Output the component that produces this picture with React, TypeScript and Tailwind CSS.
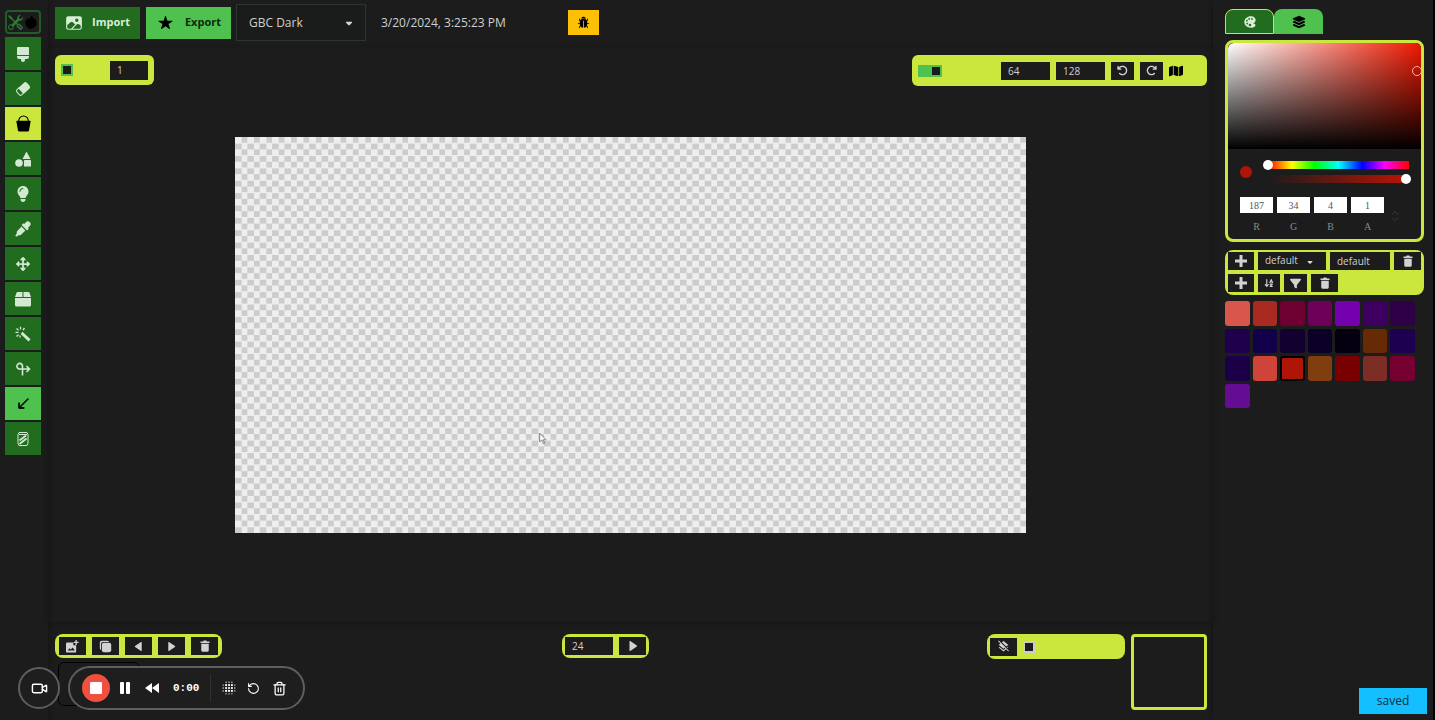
import { useState } from "react";
import type { ReactNode } from "react";
import { BiSolidLeftArrow, BiSolidRightArrow } from "react-icons/bi";
import { BsArrowDownLeft, BsTools } from "react-icons/bs";
import {
  FaArrowDownAZ,
  FaArrowRotateLeft,
  FaArrowRotateRight,
  FaArrowsUpDownLeftRight,
  FaCaretDown,
  FaFilter,
  FaLayerGroup,
  FaLightbulb,
  FaMap,
} from "react-icons/fa6";
import { ImPlus } from "react-icons/im";
import { IoBug, IoColorPalette, IoCopy, IoImage, IoStar } from "react-icons/io5";
import { MdLayersClear } from "react-icons/md";
import { LuChevronsUpDown, LuRotateCcw, LuTrash2, LuVideo } from "react-icons/lu";

const Glyph = ({ className = "size-4", children }: { className?: string; children: ReactNode }) => (
  <svg viewBox="0 0 16 16" className={className} fill="currentColor" stroke="none">
    {children}
  </svg>
);

const BrushIcon = () => (
  <Glyph>
    <path d="M3 1h10a1 1 0 0 1 1 1v7H2V2a1 1 0 0 1 1-1zM2 10h12v1a2 2 0 0 1-2 2h-2v1a2 2 0 0 1-4 0v-1H4a2 2 0 0 1-2-2z" />
  </Glyph>
);

const EraserIcon = () => (
  <Glyph>
    <g transform="rotate(-42 8 8)">
      <path d="M5.500 4H13a2 2 0 0 1 2 2v4a2 2 0 0 1-2 2H5.500z" />
      <path d="M5.500 4.500H3A1.500 1.500 0 0 0 1.500 6v4A1.500 1.500 0 0 0 3 11.500h2.500z" fill="none" stroke="currentColor" />
    </g>
  </Glyph>
);

const BucketIcon = () => (
  <Glyph className="size-[17px]">
    <path d="M3.500 6.500v-1a4.500 4.500 0 0 1 9 0v1" fill="none" stroke="currentColor" />
    <path d="M1.800 5.500h12.400a.5.500 0 0 1 .5.600L13.200 14.500a1.200 1.200 0 0 1-1.200 1H4a1.200 1.200 0 0 1-1.200-1L1.300 6.100a.5.500 0 0 1 .5-.6z" />
  </Glyph>
);

const ShapesIcon = () => (
  <Glyph>
    <circle cx="4" cy="12" r="3.800" />
    <path d="M11.500.5l4 7.500h-8z" />
    <rect x="9" y="9" width="7" height="6.500" rx=".6" />
  </Glyph>
);

const DropperIcon = () => (
  <Glyph>
    <path d="M14.800 1.200a2.700 2.700 0 0 0-3.900 0L9.200 3l-.9-.8-1.700 1.700 5.500 5.500 1.700-1.700-.8-.9 1.800-1.800a2.700 2.700 0 0 0 0-3.800z" />
    <path d="M6.500 5.600L2 10.200 1.500 13 .3 14.800l.9.9L3 14.500l2.800-.5 4.600-4.500z" />
  </Glyph>
);

const BoxIcon = () => (
  <Glyph>
    <path d="M3 1h4.500v5H0l1.500-4.200A1.300 1.300 0 0 1 3 1zM8.500 1H13a1.300 1.300 0 0 1 1.500.8L16 6H8.500zM0 7h16v7a1.500 1.500 0 0 1-1.500 1.500h-13A1.500 1.500 0 0 1 0 14z" />
  </Glyph>
);

const WandIcon = () => (
  <Glyph>
    <path d="M7.500 5.800l8 7.500-2 2.200-7.800-7.500z" />
    <path d="M5.500.8v2.700M9.500 2L8 4M1.500 2.500l2 1.700M.5 6.300h3M1.500 10.500l2-1.800M5 9.500v2" fill="none" stroke="currentColor" strokeWidth="1.300" />
  </Glyph>
);

const LoopIcon = () => (
  <Glyph>
    <path d="M7.500 14.500V6M7.500 8H5A2.800 2.800 0 1 1 7.500 5.500V8h6.500M11.500 5l3 3-3 3" fill="none" stroke="currentColor" strokeWidth="1.600" />
  </Glyph>
);

const MirrorIcon = () => (
  <Glyph>
    <path d="M4 1.500h8l1 2v9l-1 2H4l-1-2v-9z" fill="none" stroke="currentColor" />
    <path d="M4 3.500h8" stroke="currentColor" />
    <path d="M4.500 9.500l6.500-5M4.500 13l7-5.500" fill="none" stroke="currentColor" strokeWidth="1.800" />
  </Glyph>
);

const TrashIcon = () => (
  <Glyph className="size-3">
    <path d="M2 2h3.500l.8-1.500h3.400l.8 1.500H14v2H2z" />
    <path d="M3 5h10v9a1.500 1.500 0 0 1-1.500 1.500h-7A1.500 1.500 0 0 1 3 14z" />
  </Glyph>
);

const AddImageIcon = () => (
  <Glyph className="size-[13px]">
    <path d="M1.500 3H9v3.500h3.500V14a1.500 1.500 0 0 1-1.500 1.500H1.500A1.500 1.500 0 0 1 0 14V4.500A1.500 1.500 0 0 1 1.500 3zM2 13h9L8.200 9.300l-2.200 2.500-1.500-1.700z" fillRule="evenodd" />
    <path d="M12.500 0v6M9.500 3h6" stroke="currentColor" strokeWidth="1.600" />
  </Glyph>
);

const tools = [
  { name: "Brush", icon: <BrushIcon /> },
  { name: "Eraser", icon: <EraserIcon /> },
  { name: "Bucket", icon: <BucketIcon /> },
  { name: "Shapes", icon: <ShapesIcon /> },
  { name: "Light", icon: <FaLightbulb className="size-4" /> },
  { name: "Eyedropper", icon: <DropperIcon /> },
  { name: "Move", icon: <FaArrowsUpDownLeftRight /> },
  { name: "Selection box", icon: <BoxIcon /> },
  { name: "Magic wand", icon: <WandIcon /> },
  { name: "Rotate", icon: <LoopIcon /> },
  { name: "Line", icon: <BsArrowDownLeft className="size-[13px] stroke-1" /> },
  { name: "Mirror", icon: <MirrorIcon /> },
];

const swatches = [
  "#d9564a", "#a92a20", "#6e0032", "#6d0058", "#7500ae", "#3d0060", "#2e0045",
  "#1f004d", "#13004a", "#120030", "#0b0027", "#04000f", "#662a04", "#1d0050",
  "#1b0048", "#cf4438", "#ae1506", "#803d10", "#790000", "#7c2d26", "#770032",
  "#640c92",
];

type IconButtonProps = {
  label: string;
  className?: string;
  children: ReactNode;
};

const IconButton = ({ label, className = "w-[27px]", children }: IconButtonProps) => (
  <button
    aria-label={label}
    className={`flex h-[18px] shrink-0 items-center justify-center bg-[#1c1c1c] text-[13px] text-[#d2d2d2] ${className}`}
  >
    {children}
  </button>
);

const Toolbar = () => {
  const [active, setActive] = useState("Bucket");

  return (
    <nav className="flex w-12 shrink-0 flex-col gap-[2px] pt-[10px] pl-[5px] shadow-[1px_0_4px_#151515]">
      <div className="mb-px flex h-6 w-9 items-center justify-center gap-px rounded border-2 border-[#235c26] text-[15px]">
        <BsTools className="text-[#2f7a32]" />
        <svg viewBox="0 0 16 16" className="size-[14px]">
          <path d="M9 0l1 3a6.500 6.500 0 1 1-6 1l2 .5z" />
        </svg>
      </div>
      {tools.map((tool) => {
        let color = "bg-[#216c1f] text-[#d3ead2]";
        if (tool.name === "Line") color = "bg-[#4fc14e] text-black";
        if (tool.name === active) color = "bg-[#cbe63c] text-black";
        return (
          <button
            key={tool.name}
            aria-label={tool.name}
            onClick={() => setActive(tool.name)}
            className={`flex h-[33px] w-9 items-center justify-center text-sm ${color}`}
          >
            {tool.icon}
          </button>
        );
      })}
    </nav>
  );
};

const Header = () => (
  <header className="flex h-12 items-center pb-[3px] pl-[7px]">
    <button className="flex h-8 w-[85px] items-center justify-between bg-[#216c1f] px-[10px] text-[11px] font-bold text-[#d8efd6]">
      <IoImage className="size-[18px]" />
      Import
    </button>
    <button className="ml-[6px] flex h-8 w-[85px] items-center justify-between bg-[#4fc14e] pr-[10px] pl-3 text-[11px] font-bold text-[#0b2a0b]">
      <IoStar className="size-[15px] text-black" />
      Export
    </button>
    <div className="relative ml-[5px]">
      <select
        aria-label="Theme"
        className="h-[37px] w-[130px] appearance-none border border-[#2c3330] bg-[#1a1c1c] pl-3 text-[#cfcfcf]"
      >
        <option>GBC Dark</option>
      </select>
      <FaCaretDown className="pointer-events-none absolute top-[14px] right-3 size-[10px] text-[#d5d5d5]" />
    </div>
    <time className="ml-[15px] w-[187px] text-[#cfcfcf]">3/20/2024, 3:25:23 PM</time>
    <button aria-label="Report a bug" className="flex h-[25px] w-[31px] items-center justify-center bg-[#fcc006] text-black">
      <IoBug className="size-[13px]" />
    </button>
  </header>
);

const CanvasArea = () => (
  <section className="relative flex flex-1 items-center justify-center shadow-[0_1px_4px_#151515]">
    <div className="absolute top-[7px] left-[7px] flex h-[30px] w-[99px] items-center justify-between rounded-md bg-[#cbe63c] px-[6px]">
      <input
        type="checkbox"
        aria-label="Mirror brush"
        className="size-3 appearance-none border-2 border-[#4fc14e] bg-[#1c1c1c]"
      />
      <input aria-label="Brush size" defaultValue="1" className="h-[19px] w-[38px] bg-[#1c1c1c] px-[7px] text-[10px] text-[#cfcfcf]" />
    </div>

    <div className="absolute top-[7px] right-[6px] flex h-[31px] w-[295px] items-center gap-[6px] rounded-md bg-[#cbe63c] pl-[6px]">
      <label className="mr-[53px] flex h-3 w-6 items-center justify-end bg-[#4fc14e] pr-[2px]">
        <input type="checkbox" defaultChecked aria-label="Show grid" className="size-2 appearance-none bg-[#1c1c1c]" />
      </label>
      <input aria-label="Height" defaultValue="64" className="h-[18px] w-[49px] bg-[#1c1c1c] px-[7px] text-[10px] text-[#cfcfcf]" />
      <input aria-label="Width" defaultValue="128" className="h-[18px] w-[49px] bg-[#1c1c1c] px-[7px] text-[10px] text-[#cfcfcf]" />
      <IconButton label="Undo" className="w-[23px]">
        <FaArrowRotateLeft className="size-[11px]" />
      </IconButton>
      <IconButton label="Redo" className="w-[23px]">
        <FaArrowRotateRight className="size-[11px]" />
      </IconButton>
      <FaMap className="size-[14px] text-black" />
    </div>

    <div className="relative aspect-[2/1] w-[67.9%] bg-[#eeeeee] bg-[conic-gradient(#cccccc_25%,#eeeeee_0_50%,#cccccc_0_75%,#eeeeee_0)] bg-[length:1.5625%_3.125%]">
      <svg viewBox="0 0 12 18" className="absolute top-[74.5%] left-[38.4%] h-[13px] w-2">
        <path d="M1 1v13l3-3 2.500 6 2-1-2.500-5h4.500z" fill="#fff" stroke="#555" />
      </svg>
    </div>
  </section>
);

const Timeline = () => (
  <footer className="flex h-[98px] items-start justify-between pt-3 pr-[6px] pl-[7px]">
    <div className="flex flex-1 flex-col items-start gap-1">
      <div className="flex h-6 items-center gap-[6px] rounded-lg bg-[#cbe63c] px-1">
        <IconButton label="Add frame">
          <AddImageIcon />
        </IconButton>
        <IconButton label="Copy frame">
          <IoCopy />
        </IconButton>
        <IconButton label="Previous frame">
          <BiSolidLeftArrow className="size-[11px]" />
        </IconButton>
        <IconButton label="Next frame">
          <BiSolidRightArrow className="size-[11px]" />
        </IconButton>
        <IconButton label="Delete frame">
          <TrashIcon />
        </IconButton>
      </div>
      <div className="ml-[3px] h-11 w-[82px] rounded-md border border-black" />
    </div>

    <div className="mr-[51px] flex h-6 items-center gap-[6px] rounded-lg bg-[#cbe63c] px-[3px]">
      <input aria-label="Frames per second" defaultValue="24" className="h-[18px] w-12 bg-[#1c1c1c] px-[7px] text-[10px] text-[#cfcfcf]" />
      <IconButton label="Play">
        <BiSolidRightArrow className="size-3" />
      </IconButton>
    </div>

    <div className="flex flex-1 items-start justify-end gap-[6px]">
      <div className="flex h-[25px] w-[138px] items-center gap-[6px] rounded-lg bg-[#cbe63c] px-[3px]">
        <IconButton label="Clear layers">
          <MdLayersClear />
        </IconButton>
        <input type="checkbox" aria-label="Onion skin" className="size-3 appearance-none border-2 border-[#cccccc] bg-[#1c1c1c]" />
      </div>
      <div className="size-[76px] rounded border-[3px] border-[#cbe63c]" />
    </div>
  </footer>
);

const channels = [
  { name: "R", value: 187 },
  { name: "G", value: 34 },
  { name: "B", value: 4 },
  { name: "A", value: 1 },
];

const ColorPicker = () => (
  <div className="mt-[6px] h-[202px] rounded-lg border-[3px] border-[#cbe63c]">
    <div className="relative h-[106px] overflow-hidden rounded-t-md bg-[#f01800] bg-[linear-gradient(to_top,#000,transparent),linear-gradient(to_right,#fff,transparent)]">
      <span className="absolute top-[23px] -right-px size-[10px] rounded-full border border-[#ffb0a0]" />
    </div>
    <div className="mt-[12px] flex items-center gap-4 px-3">
      <span className="size-3 rounded-full bg-[#b01406]" />
      <div className="flex flex-1 flex-col gap-[6px]">
        <div className="relative h-2 bg-[linear-gradient(to_right,#f00,#ff0_17%,#0f0_33%,#0ff_50%,#00f_67%,#f0f_83%,#f00)]">
          <span className="absolute -top-px -left-[5px] size-[10px] rounded-full bg-white" />
        </div>
        <div className="relative h-2 bg-linear-to-r from-transparent to-[#bb1404]">
          <span className="absolute -top-px -right-[2px] size-[10px] rounded-full bg-white" />
        </div>
      </div>
    </div>
    <div className="mt-[14px] flex items-center gap-1 pl-3 font-['Liberation_Serif',serif] text-[10px]">
      {channels.map(({ name, value }) => (
        <label key={name} className="flex w-[33px] flex-col items-center text-[#8a8a8a]">
          <input defaultValue={value} className="h-4 w-full bg-white text-center text-[#555555]" />
          <span className="mt-[6px] leading-4">{name}</span>
        </label>
      ))}
      <LuChevronsUpDown className="size-[14px] text-[#2f2f2f]" />
    </div>
  </div>
);

const Palette = () => (
  <div className="mt-2 flex h-[45px] flex-col gap-1 rounded-lg bg-[#cbe63c] px-[3px] pt-[2px]">
    <div className="flex gap-1">
      <IconButton label="Add palette" className="w-[26px]">
        <ImPlus className="size-3" />
      </IconButton>
      <div className="relative">
        <select aria-label="Palette" className="block h-[18px] w-[68px] appearance-none bg-[#1c1c1c] pl-[7px] text-[10px] text-[#cfcfcf]">
          <option>default</option>
        </select>
        <FaCaretDown className="pointer-events-none absolute top-[6px] right-3 size-2 text-[#d5d5d5]" />
      </div>
      <input aria-label="Palette name" defaultValue="default" className="h-[18px] w-0 flex-1 bg-[#1c1c1c] px-[7px] text-[10px] text-[#cfcfcf]" />
      <IconButton label="Delete palette">
        <TrashIcon />
      </IconButton>
    </div>
    <div className="flex gap-1">
      <IconButton label="Add color" className="w-[26px]">
        <ImPlus className="size-3" />
      </IconButton>
      <IconButton label="Sort colors" className="w-[22px]">
        <FaArrowDownAZ className="size-[10px]" />
      </IconButton>
      <IconButton label="Filter colors" className="w-[23px]">
        <FaFilter className="size-[11px]" />
      </IconButton>
      <IconButton label="Delete color">
        <TrashIcon />
      </IconButton>
    </div>
  </div>
);

const Sidebar = () => (
  <aside className="w-[222px] shrink-0 border-r-2 border-black pt-[9px] pr-[9px] pl-3 shadow-[-1px_0_4px_#151515]">
    <div className="flex">
      <button aria-label="Colors" className="flex h-[25px] w-[49px] items-center justify-center rounded-t-lg border border-[#cbe63c] bg-[#216c1f] text-[#d8efd6]">
        <IoColorPalette className="size-[14px]" />
      </button>
      <button aria-label="Layers" className="flex h-[25px] w-[49px] items-center justify-center rounded-t-lg bg-[#4fc14e] text-black">
        <FaLayerGroup className="size-[14px]" />
      </button>
    </div>
    <ColorPicker />
    <Palette />
    <div className="mt-[6px] mr-[9px] grid grid-cols-7 gap-[3px]">
      {swatches.map((color) => (
        <button
          key={color}
          aria-label={color}
          className={`aspect-square rounded-[3px] ${color === "#ae1506" ? "border-2 border-black" : ""}`}
          style={{ backgroundColor: color }}
        />
      ))}
    </div>
  </aside>
);

const dots = [
  [7, 2], [12, 2], [17, 2],
  [2, 7], [7, 7], [12, 7], [17, 7], [22, 7],
  [2, 12], [7, 12], [12, 12], [17, 12], [22, 12],
  [2, 17], [7, 17], [12, 17], [17, 17], [22, 17],
  [7, 22], [12, 22], [17, 22],
];

const Recorder = () => (
  <div className="fixed bottom-[10px] left-[18px] flex items-center gap-2 text-white">
    <button aria-label="Camera" className="flex size-[42px] items-center justify-center rounded-full border-2 border-[#5e5e5e] bg-[#1e1e1e]">
      <LuVideo className="size-[17px]" />
    </button>
    <div className="flex h-11 w-[237px] items-center rounded-full border-2 border-[#5e5e5e] bg-[#1e1e1e] pl-3">
      <button aria-label="Stop" className="flex size-7 items-center justify-center rounded-full bg-[#f0503f]">
        <span className="size-3 rounded-[1px] bg-white" />
      </button>
      <button aria-label="Pause" className="ml-[10px] flex gap-[2px]">
        <span className="h-3 w-1 rounded-[1px] bg-white" />
        <span className="h-3 w-1 rounded-[1px] bg-white" />
      </button>
      <button aria-label="Restart" className="ml-[15px]">
        <svg viewBox="0 0 14 10" className="h-[10px] w-[14px]" fill="currentColor">
          <path d="M7 0v10L0 5zM14 0v10L7 5z" />
        </svg>
      </button>
      <span className="ml-[14px] w-[26px] font-['Liberation_Mono',monospace] text-[11px] font-bold">0:00</span>
      <span className="ml-[11px] h-7 w-px bg-[#303030]" />
      <button aria-label="Blur" className="ml-[11px]">
        <svg viewBox="0 0 24 24" className="size-[14px]" fill="currentColor">
          {dots.map(([x, y]) => (
            <circle key={`${x}-${y}`} cx={x} cy={y} r={x > 6 && x < 18 && y > 5 && y < 19 ? 1.9 : 1.1} />
          ))}
        </svg>
      </button>
      <button aria-label="Reset" className="ml-[11px]">
        <LuRotateCcw className="size-[13px]" />
      </button>
      <button aria-label="Discard" className="ml-3">
        <LuTrash2 className="size-[15px]" />
      </button>
    </div>
  </div>
);

export default function App() {
  return (
    <div className="flex min-h-screen bg-[#1c1c1c] font-['Open_Sans','Noto_Sans',sans-serif] text-xs">
      <Toolbar />
      <main className="flex min-w-0 flex-1 flex-col">
        <Header />
        <CanvasArea />
        <Timeline />
      </main>
      <Sidebar />
      <Recorder />
      <div role="status" className="fixed right-2 bottom-[6px] flex h-[26px] w-[68px] items-center justify-center bg-[#14bfff] text-[#12303d]">
        saved
      </div>
    </div>
  );
}
